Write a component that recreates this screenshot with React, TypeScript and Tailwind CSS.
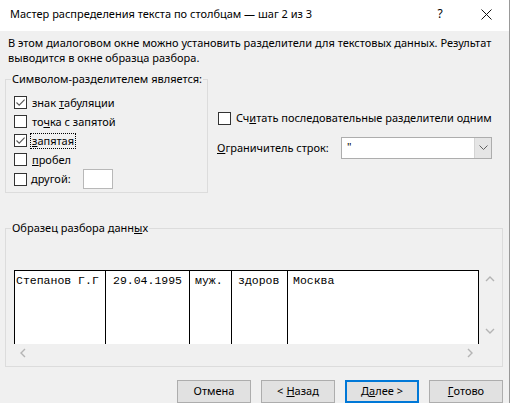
import React from 'react'

type Opt = { label: React.ReactNode; checked?: boolean; focus?: boolean }

const ui = "font-['Noto_Sans','Liberation_Sans',sans-serif]"
const mono = "font-['Liberation_Mono','Courier_New',monospace]"

function Box({ checked }: { checked?: boolean }) {
  return (
    <span className="w-[13px] h-[13px] border border-[#333333] bg-white flex items-center justify-center shrink-0">
      {checked && (
        <svg width="11" height="11" viewBox="0 0 11 11">
          <path d="M1.5 5.5 L4.2 8.2 L9.6 2.6" stroke="#555" strokeWidth="1.1" fill="none" />
        </svg>
      )}
    </span>
  )
}

function Chevron({ dir }: { dir: 'up' | 'down' | 'left' | 'right' }) {
  const d = {
    up: 'M1 6 L5 2 L9 6',
    down: 'M1 2 L5 6 L9 2',
    left: 'M6 1 L2 5 L6 9',
    right: 'M2 1 L6 5 L2 9',
  }[dir]
  const wide = dir === 'up' || dir === 'down'
  return (
    <svg width={wide ? 10 : 8} height={wide ? 8 : 10} viewBox={wide ? '0 0 10 8' : '0 0 8 10'}>
      <path d={d} stroke="#b4b4b4" strokeWidth="1.4" fill="none" />
    </svg>
  )
}

const options: Opt[] = [
  { label: <>знак <u className="underline">т</u>абуляции</>, checked: true },
  { label: <>то<u className="underline">ч</u>ка с запятой</> },
  { label: <><u className="underline">з</u>апятая</>, checked: true, focus: true },
  { label: <><u className="underline">п</u>робел</> },
]

const cols = [
  { text: 'Степанов Г.Г', w: 'w-[91px]', pad: 'pl-[1px]' },
  { text: '29.04.1995', w: 'w-[84px]', pad: 'pl-[7px]' },
  { text: 'муж.', w: 'w-[42px]', pad: 'pl-[5px]' },
  { text: 'здоров', w: 'w-[56px]', pad: 'pl-[6px]' },
]

function Button({ children, primary }: { children: React.ReactNode; primary?: boolean }) {
  return (
    <button
      className={
        'w-[74px] h-[23px] bg-[#e1e1e1] flex items-center justify-center ' +
        (primary ? 'border-2 border-[#0078d7]' : 'border border-[#adadad]')
      }
    >
      {children}
    </button>
  )
}

export default function App() {
  return (
    <div className={`w-[510px] h-[403px] overflow-hidden bg-[#f0f0f0] text-[11px] text-black border-r border-[#999999] flex flex-col whitespace-nowrap ${ui}`}>
      {/* title bar */}
      <div className="h-[31px] bg-white flex items-center pl-[10px] shrink-0">
        <span className="pb-[3px]">Мастер распределения текста по столбцам — шаг 2 из 3</span>
        <div className="ml-auto flex h-full">
          <span className="w-[46px] flex items-center justify-center text-[12px] pb-[3px]">?</span>
          <span className="w-[46px] flex items-center justify-center pb-[3px]">
            <svg width="11" height="11" viewBox="0 0 11 11">
              <path d="M0.5 0.5 L10.5 10.5 M10.5 0.5 L0.5 10.5" stroke="#111" strokeWidth="1" />
            </svg>
          </span>
        </div>
      </div>

      <div className="px-[8px] pt-[4px] leading-[15px]">
        В этом диалоговом окне можно установить разделители для текстовых данных. Результат
        <br />
        выводится в окне образца разбора.
      </div>

      <div className="flex mt-[14px]">
        {/* delimiters */}
        <div className="ml-[5px] w-[203px] h-[114px] border border-[#dcdcdc] relative flex flex-col pl-[8px] pt-[13px]">
          <span className="absolute left-[5px] -top-[9px] px-[1px] bg-[#f0f0f0] leading-[16px]">
            Символом-разделителем является:
          </span>
          {options.map((o, i) => (
            <div key={i} className="h-[19px] flex items-center">
              <Box checked={o.checked} />
              <span
                className={
                  'ml-[3px] leading-[14px] px-[1px] ' +
                  (o.focus ? 'border border-dotted border-black' : 'border border-transparent')
                }
              >
                {o.label}
              </span>
            </div>
          ))}
          <div className="h-[20px] flex items-center">
            <Box />
            <span className="ml-[4px] w-[52px]">
              <u className="underline">д</u>ругой:
            </span>
            <span className="w-[30px] h-[20px] border border-[#b8b8b8] bg-white" />
          </div>
        </div>

        {/* options */}
        <div className="ml-[10px] flex flex-col">
          <div className="mt-[30px] h-[19px] flex items-center">
            <Box />
            <span className="ml-[5px]">
              Сч<u className="underline">и</u>тать последовательные разделители одним
            </span>
          </div>
          <div className="mt-[9px] flex items-center -ml-[1px]">
            <span className="w-[124px]">
              <u className="underline">О</u>граничитель строк:
            </span>
            <div className="w-[151px] h-[22px] border border-[#adadad] bg-white flex">
              <span className="flex-1 pl-[5px] leading-[18px]">"</span>
              <span className="w-[17px] h-full bg-[#e5e5e5] border-l border-[#d4d4d4] flex items-center justify-center">
                <svg width="9" height="6" viewBox="0 0 9 6">
                  <path d="M0.5 0.5 L4.5 4.5 L8.5 0.5" stroke="#606060" strokeWidth="1" fill="none" />
                </svg>
              </span>
            </div>
          </div>
        </div>
      </div>

      {/* preview */}
      <div className="mt-[35px] ml-[5px] w-[498px] h-[139px] border border-[#dcdcdc] relative pl-[8px] pt-[41px] shrink-0">
        <span className="absolute left-[5px] -top-[9px] px-[1px] bg-[#f0f0f0] leading-[16px]">
          Образец разбора данн<u className="underline">ы</u>х
        </span>
        <div className="flex">
          <div className={`w-[465px] h-[74px] bg-white border-l border-t border-r border-black flex text-[11.5px] leading-[14px] ${mono}`}>
            {cols.map((c, i) => (
              <div key={i} className={`${c.w} h-full border-r border-black pt-[3px] ${c.pad}`}>
                {c.text}
              </div>
            ))}
            <div className="flex-1 pl-[5px] pt-[3px]">Москва</div>
          </div>
          <div className="w-[17px] flex flex-col items-center justify-between pt-[5px] pb-[9px] ml-[2px]">
            <Chevron dir="up" />
            <Chevron dir="down" />
          </div>
        </div>
        <div className="w-[465px] h-[17px] flex items-center justify-between pl-[5px] pr-[5px]">
          <Chevron dir="left" />
          <Chevron dir="right" />
        </div>
      </div>

      <div className="flex gap-[10px] ml-[177px] mt-[13px]">
        <Button>Отмена</Button>
        <Button>
          &lt; <u className="underline ml-[3px]">Н</u>азад
        </Button>
        <Button primary>
          Д<u className="underline">а</u>лее &gt;
        </Button>
        <Button>
          <u className="underline">Г</u>отово
        </Button>
      </div>
    </div>
  )
}
